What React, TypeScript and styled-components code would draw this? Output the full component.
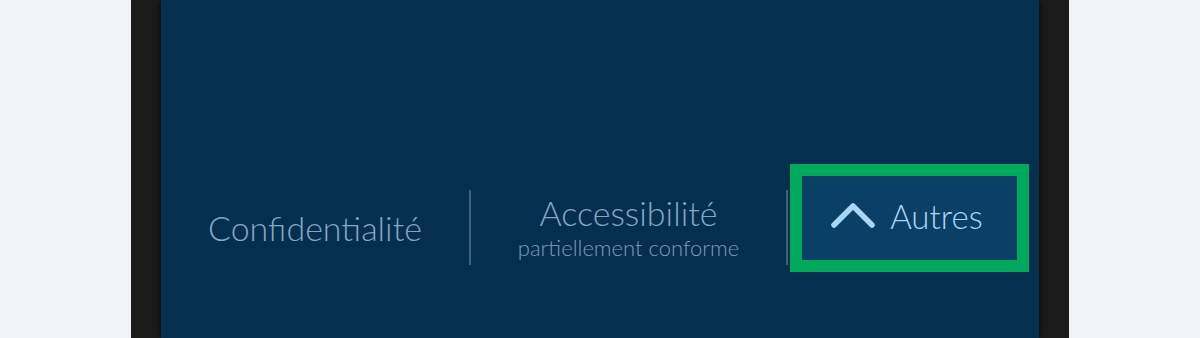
import React from "react";
import styled, { createGlobalStyle } from "styled-components";

const Global = createGlobalStyle`
  html, body { margin: 0; padding: 0; background: #f2f3f8; }
  body { font-family: Lato, "Open Sans", sans-serif; }
`;

const Device = styled.div`
  width: 938px;
  height: 338px;
  margin: 0 auto;
  padding: 0 30px;
  box-sizing: border-box;
  background: #1b1b1b;
`;

const Panel = styled.div`
  height: 100%;
  background: #052f4f;
  box-shadow: -5px 0 4px -2px rgba(0, 0, 0, 0.35), 5px 0 4px -2px rgba(0, 0, 0, 0.35);
  padding-top: 164px;
  box-sizing: border-box;
`;

const Row = styled.nav`
  display: flex;
  align-items: flex-start;
`;

const Item = styled.a<{ $w: number }>`
  width: ${(p) => p.$w}px;
  height: 75px;
  margin-top: 26px;
  display: flex;
  flex-direction: column;
  align-items: center;
  justify-content: center;
  text-decoration: none;
  color: #86a6c1;
`;

const Title = styled.span`
  font-size: 34px;
  font-weight: 300;
  line-height: 38px;
`;

const Sub = styled.span`
  font-size: 22px;
  font-weight: 300;
  line-height: 28px;
  margin-top: 2px;
  color: #7d9cb8;
`;

const Divider = styled.span`
  width: 2px;
  height: 75px;
  margin-top: 26px;
  background: #3f5f7b;
`;

const Button = styled.button`
  margin-left: 2px;
  width: 239px;
  height: 108px;
  box-sizing: border-box;
  border: 12px solid #00a95c;
  background: #0a3f66;
  display: flex;
  align-items: center;
  justify-content: center;
  gap: 15px;
  padding: 0 5px 4px 0;
  color: #a8d6f4;
  font-family: Lato, "Open Sans", sans-serif;
  font-size: 33px;
  font-weight: 300;
  cursor: pointer;
`;

export default function App() {
  return (
    <>
      <Global />
      <Device>
        <Panel>
          <Row>
            <Item $w={308} href="#">
              <Title>Confidentialité</Title>
            </Item>
            <Divider />
            <Item $w={315} href="#">
              <Title>Accessibilité</Title>
              <Sub>partiellement conforme</Sub>
            </Item>
            <Divider />
            <Button type="button">
              <svg width="44" height="26" viewBox="0 0 44 26" aria-hidden="true">
                <path
                  d="M3 22 L22 3 L41 22"
                  fill="none"
                  stroke="#a8d6f4"
                  strokeWidth="5.5"
                  strokeLinecap="round"
                  strokeLinejoin="round"
                />
              </svg>
              <span>Autres</span>
            </Button>
          </Row>
        </Panel>
      </Device>
    </>
  );
}
